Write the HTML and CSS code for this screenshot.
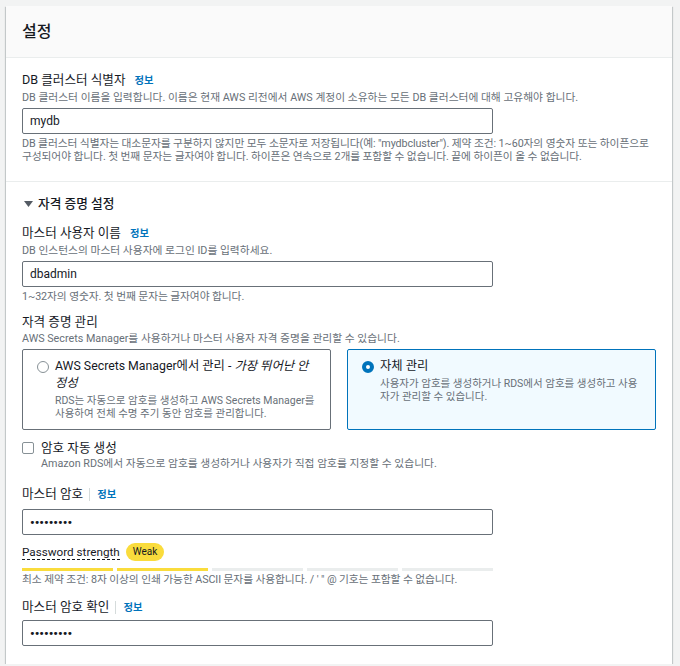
FILE: index.html
```html
<!DOCTYPE html>
<html lang="ko">
<head>
  <meta charset="UTF-8">
  <meta name="viewport" content="width=device-width, initial-scale=1.0">
  <title>설정</title>
  <link rel="stylesheet" href="styles.css">
</head>
<body>
  <div class="panel">
    <div class="panel-header">
      <h2>설정</h2>
    </div>

    <div class="section">
      <div class="label">DB 클러스터 식별자 <a class="info">정보</a></div>
      <div class="desc">DB 클러스터 이름을 입력합니다. 이름은 현재 AWS 리전에서 AWS 계정이 소유하는 모든 DB 클러스터에 대해 고유해야 합니다.</div>
      <input class="text-input" type="text" value="mydb">
      <div class="hint">DB 클러스터 식별자는 대소문자를 구분하지 않지만 모두 소문자로 저장됩니다(예: "mydbcluster"). 제약 조건: 1~60자의 영숫자 또는 하이픈으로 구성되어야 합니다. 첫 번째 문자는 글자여야 합니다. 하이픈은 연속으로 2개를 포함할 수 없습니다. 끝에 하이픈이 올 수 없습니다.</div>
    </div>

    <div class="section last">
      <div class="expander">
        <svg width="9" height="6" viewBox="0 0 9 6"><polygon points="0,0 9,0 4.5,6" fill="#545b64"/></svg>
        자격 증명 설정
      </div>

      <div class="field first">
        <div class="label">마스터 사용자 이름 <a class="info">정보</a></div>
        <div class="desc">DB 인스턴스의 마스터 사용자에 로그인 ID를 입력하세요.</div>
        <input class="text-input" type="text" value="dbadmin">
        <div class="hint">1~32자의 영숫자. 첫 번째 문자는 글자여야 합니다.</div>
      </div>

      <div class="field">
        <div class="label">자격 증명 관리</div>
        <div class="desc">AWS Secrets Manager를 사용하거나 마스터 사용자 자격 증명을 관리할 수 있습니다.</div>
        <div class="tiles">
          <div class="tile">
            <span class="radio"></span>
            <div class="tile-text">
              <div class="tile-title">AWS Secrets Manager에서 관리 - <i>가장 뛰어난 안정성</i></div>
              <div class="desc">RDS는 자동으로 암호를 생성하고 AWS Secrets Manager를 사용하여 전체 수명 주기 동안 암호를 관리합니다.</div>
            </div>
          </div>
          <div class="tile selected">
            <span class="radio checked"></span>
            <div class="tile-text">
              <div class="tile-title">자체 관리</div>
              <div class="desc">사용자가 암호를 생성하거나 RDS에서 암호를 생성하고 사용자가 관리할 수 있습니다.</div>
            </div>
          </div>
        </div>
        <div class="checkbox-row">
          <span class="checkbox"></span>
          <div>
            <div class="label">암호 자동 생성</div>
            <div class="desc">Amazon RDS에서 자동으로 암호를 생성하거나 사용자가 직접 암호를 지정할 수 있습니다.</div>
          </div>
        </div>
      </div>

      <div class="field spaced">
        <div class="label">마스터 암호 <a class="info divided">정보</a></div>
        <input class="text-input pw" type="password" value="123456789">
        <div class="strength">
          <span class="strength-label">Password strength</span>
          <span class="badge">Weak</span>
        </div>
        <div class="bars">
          <span class="bar on"></span>
          <span class="bar on"></span>
          <span class="bar"></span>
          <span class="bar"></span>
          <span class="bar"></span>
        </div>
        <div class="hint tight">최소 제약 조건: 8자 이상의 인쇄 가능한 ASCII 문자를 사용합니다. / ' " @ 기호는 포함할 수 없습니다.</div>
      </div>

      <div class="field confirm">
        <div class="label">마스터 암호 확인 <a class="info divided">정보</a></div>
        <input class="text-input pw" type="password" value="123456789">
      </div>
    </div>
  </div>
</body>
</html>
```

FILE: styles.css
```css
html, body {
  margin: 0;
  background: #f2f3f3;
  font-family: Roboto, "Noto Sans CJK KR", sans-serif;
  color: #16191f;
}
.panel {
  width: 666px;
  margin: 6px 0 0 6px;
  background: #fff;
  box-shadow: 0 1px 1px 0 rgba(0,28,36,0.3), 1px 1px 1px 0 rgba(0,28,36,0.15), -1px 1px 1px 0 rgba(0,28,36,0.15);
}
.panel-header {
  box-sizing: border-box;
  height: 52px;
  padding: 0 16px;
  display: flex;
  align-items: center;
  background: #fafafa;
  border-bottom: 1px solid #eaeded;
}
.panel-header h2 {
  margin: 0;
  font-size: 16px;
  font-weight: 500;
  line-height: 20px;
}
.section {
  padding: 14px 16px 18px;
  border-bottom: 1px solid #eaeded;
}
.section.last {
  padding-top: 13px;
  border-bottom: none;
}
.label {
  font-size: 12.6px;
  line-height: 16px;
}
.info {
  margin-left: 6px;
  color: #0073bb;
  font-size: 10.3px;
  font-weight: 700;
  cursor: pointer;
}
.info.divided {
  margin-left: 3px;
  padding-left: 7px;
  border-left: 1px solid #d5dbdb;
}
.desc, .hint {
  font-size: 10.75px;
  line-height: 13px;
  color: #687078;
}
.desc {
  margin-top: 2px;
}
.hint {
  margin-top: 3px;
  letter-spacing: -0.1px;
}
.hint.tight {
  margin-top: 2px;
}
.text-input {
  display: block;
  box-sizing: border-box;
  width: 471px;
  height: 26px;
  margin-top: 4px;
  padding: 0 7px;
  border: 1px solid #687078;
  border-radius: 2px;
  background: #fff;
  font-family: inherit;
  font-size: 12px;
  color: #16191f;
  outline: none;
}
.text-input.pw {
  font-size: 13px;
  font-weight: 700;
}
.expander {
  display: flex;
  align-items: center;
  gap: 5px;
  padding-left: 2px;
  font-size: 12.7px;
  font-weight: 500;
  line-height: 18px;
}
.field {
  margin-top: 11px;
}
.field.first {
  margin-top: 12px;
}
.field.spaced {
  margin-top: 16px;
}
.field.spaced .text-input {
  margin-top: 6px;
}
.field.confirm {
  margin-top: 13px;
}
.tiles {
  display: grid;
  grid-template-columns: 1fr 1fr;
  gap: 16px;
  margin-top: 4px;
}
.tile {
  display: flex;
  gap: 6px;
  padding: 8px 14px 9px;
  border: 1px solid #687078;
  border-radius: 2px;
}
.tile.selected {
  background: #f1faff;
  border-color: #0073bb;
}
.tile-title {
  font-size: 12.3px;
  line-height: 17px;
}
.tile .desc {
  font-size: 10.5px;
}
.radio {
  flex: none;
  box-sizing: border-box;
  width: 12px;
  height: 12px;
  margin-top: 3px;
  border: 1.5px solid #879196;
  border-radius: 50%;
  background: #fff;
}
.radio.checked {
  border: 4px solid #0073bb;
}
.checkbox-row {
  display: flex;
  gap: 7px;
  margin-top: 10px;
}
.checkbox {
  flex: none;
  box-sizing: border-box;
  width: 12px;
  height: 12px;
  margin-top: 2px;
  border: 1.5px solid #879196;
  border-radius: 2px;
}
.checkbox-row .desc {
  margin-top: 1px;
}
.strength {
  display: flex;
  align-items: center;
  gap: 6px;
  margin-top: 8px;
  height: 18px;
}
.strength-label {
  font-size: 11.7px;
  line-height: 14px;
  border-bottom: 1px dashed #16191f;
}
.badge {
  padding: 0 7px;
  border-radius: 9px;
  background: #fadc3c;
  font-size: 10px;
  line-height: 18px;
}
.bars {
  display: grid;
  grid-template-columns: repeat(5, 1fr);
  gap: 4px;
  width: 471px;
  margin-top: 7px;
}
.bar {
  height: 3px;
  background: #eaeded;
}
.bar.on {
  background: #fadc3c;
}
```
